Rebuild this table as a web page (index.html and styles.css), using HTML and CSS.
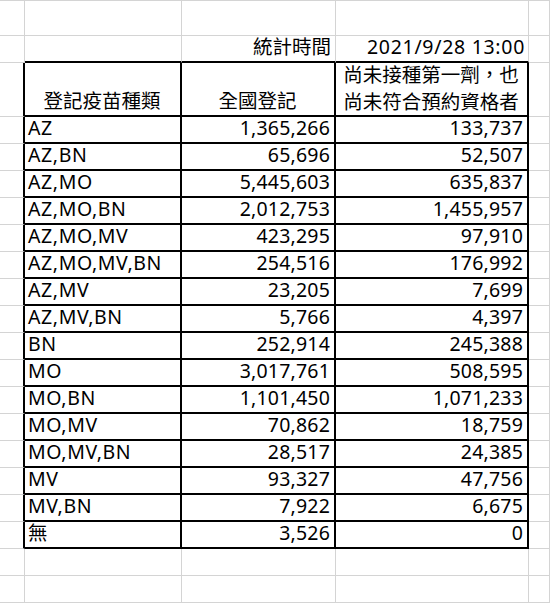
FILE: index.html
```html
<!DOCTYPE html>
<html lang="zh-Hant">
<head>
<meta charset="utf-8">
<title>登記疫苗種類</title>
<link rel="stylesheet" href="styles.css">
</head>
<body>
<div class="sheet">
  <div class="c t"></div><div class="c t"></div><div class="c t"></div><div class="c t"></div><div class="c t"></div>

  <div class="c"></div><div class="c bb"></div><div class="c bb r">統計時間</div><div class="c bb r date">2021/9/28 13:00</div><div class="c"></div>

  <div class="c br"></div><div class="c bb br ctr">登記疫苗種類</div><div class="c bb br ctr">全國登記</div><div class="c bb br ctr two">尚未接種第一劑，也<br>尚未符合預約資格者</div><div class="c"></div>

  <div class="c br"></div><div class="c bb br l">AZ</div><div class="c bb br r n">1,365,266</div><div class="c bb br r n">133,737</div><div class="c"></div>
  <div class="c br"></div><div class="c bb br l">AZ,BN</div><div class="c bb br r n">65,696</div><div class="c bb br r n">52,507</div><div class="c"></div>
  <div class="c br"></div><div class="c bb br l">AZ,MO</div><div class="c bb br r n">5,445,603</div><div class="c bb br r n">635,837</div><div class="c"></div>
  <div class="c br"></div><div class="c bb br l">AZ,MO,BN</div><div class="c bb br r n">2,012,753</div><div class="c bb br r n">1,455,957</div><div class="c"></div>
  <div class="c br"></div><div class="c bb br l">AZ,MO,MV</div><div class="c bb br r n">423,295</div><div class="c bb br r n">97,910</div><div class="c"></div>
  <div class="c br"></div><div class="c bb br l">AZ,MO,MV,BN</div><div class="c bb br r n">254,516</div><div class="c bb br r n">176,992</div><div class="c"></div>
  <div class="c br"></div><div class="c bb br l">AZ,MV</div><div class="c bb br r n">23,205</div><div class="c bb br r n">7,699</div><div class="c"></div>
  <div class="c br"></div><div class="c bb br l">AZ,MV,BN</div><div class="c bb br r n">5,766</div><div class="c bb br r n">4,397</div><div class="c"></div>
  <div class="c br"></div><div class="c bb br l">BN</div><div class="c bb br r n">252,914</div><div class="c bb br r n">245,388</div><div class="c"></div>
  <div class="c br"></div><div class="c bb br l">MO</div><div class="c bb br r n">3,017,761</div><div class="c bb br r n">508,595</div><div class="c"></div>
  <div class="c br"></div><div class="c bb br l">MO,BN</div><div class="c bb br r n">1,101,450</div><div class="c bb br r n">1,071,233</div><div class="c"></div>
  <div class="c br"></div><div class="c bb br l">MO,MV</div><div class="c bb br r n">70,862</div><div class="c bb br r n">18,759</div><div class="c"></div>
  <div class="c br"></div><div class="c bb br l">MO,MV,BN</div><div class="c bb br r n">28,517</div><div class="c bb br r n">24,385</div><div class="c"></div>
  <div class="c br"></div><div class="c bb br l">MV</div><div class="c bb br r n">93,327</div><div class="c bb br r n">47,756</div><div class="c"></div>
  <div class="c br"></div><div class="c bb br l">MV,BN</div><div class="c bb br r n">7,922</div><div class="c bb br r n">6,675</div><div class="c"></div>
  <div class="c br"></div><div class="c bb br l">無</div><div class="c bb br r n">3,526</div><div class="c bb br r n">0</div><div class="c"></div>

  <div class="c"></div><div class="c"></div><div class="c"></div><div class="c"></div><div class="c"></div>
  <div class="c"></div><div class="c"></div><div class="c"></div><div class="c"></div><div class="c"></div>
</div>
</body>
</html>
```

FILE: styles.css
```css
html, body {
  margin: 0;
  padding: 0;
  background: #ffffff;
}

.sheet {
  display: grid;
  grid-template-columns: 25px 157px 154px 193px 21px;
  grid-template-rows: 36px 27px 54px repeat(16, 27px) 27px 27px;
  width: 550px;
  height: 603px;
  overflow: hidden;
  font-family: "Noto Sans", "Noto Sans CJK TC", sans-serif;
  font-size: 19.5px;
  color: #000000;
}

.c {
  box-sizing: border-box;
  border-right: 1px solid #d4d4d4;
  border-bottom: 1px solid #d4d4d4;
  display: flex;
  align-items: flex-end;
  padding: 0 4px 1px 3px;
  line-height: 26px;
  white-space: nowrap;
}

.t {
  border-top: 1px solid #d4d4d4;
}

.bb {
  border-bottom: 2px solid #000000;
}

.br {
  border-right: 2px solid #000000;
}

.r {
  justify-content: flex-end;
}

.l {
  justify-content: flex-start;
  letter-spacing: 0.6px;
}

.n {
  letter-spacing: 0.2px;
}

.date {
  letter-spacing: 0.7px;
  padding-right: 3px;
}

.ctr {
  justify-content: center;
  text-align: center;
}

.two {
  line-height: 27px;
  padding-bottom: 0;
}
```
